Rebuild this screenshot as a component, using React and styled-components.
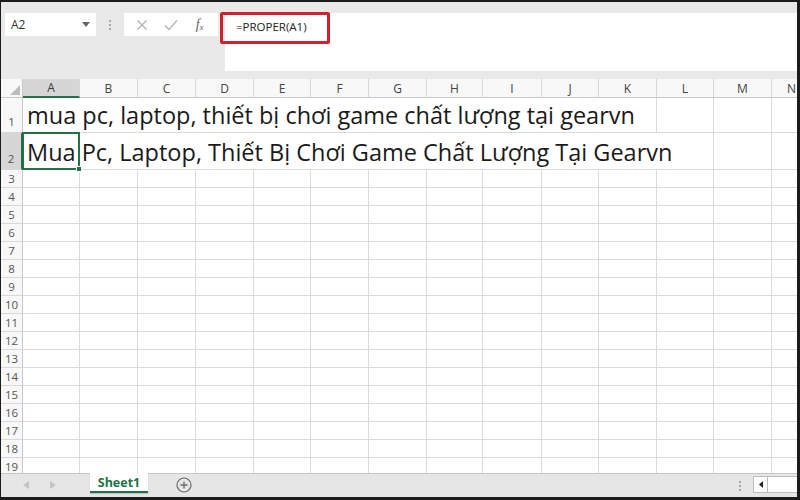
import React from "react";
import styled, { createGlobalStyle } from "styled-components";

const GlobalStyle = createGlobalStyle`
  html, body {
    margin: 0;
    padding: 0;
    background: #ffffff;
  }
  * {
    box-sizing: border-box;
  }
`;

const UI_FONT = `"Open Sans", "Noto Sans", "Liberation Sans", sans-serif`;
const GREEN = "#217346";
const GRID = "#dadada";

const COLUMNS = ["A", "B", "C", "D", "E", "F", "G", "H", "I", "J", "K", "L", "M", "N"];
const WIDTHS = [57, 58, 58, 58, 57, 58, 58, 56, 59, 57, 58, 57, 58, 40];

const ROW1 = "mua pc, laptop, thiết bị chơi game chất lượng tại gearvn";
const ROW2 = "Mua Pc, Laptop, Thiết Bị Chơi Game Chất Lượng Tại Gearvn";

function App() {
  const rows = [];
  for (let r = 1; r <= 19; r++) rows.push(r);

  // text overflows to the right, so inner grid lines are hidden up to this column
  const spillEnd = { 1: 10, 2: 11 };

  return (
    <>
      <GlobalStyle />
      <Frame>
        <Toolbar>
          <NameBox>
            <span>A2</span>
            <Caret>
              <svg width="8" height="5" viewBox="0 0 8 5">
                <path d="M0 0H8L4 5Z" fill="#666" />
              </svg>
            </Caret>
          </NameBox>
          <Grip>
            <Dot />
            <Dot />
            <Dot />
          </Grip>
          <ButtonBox>
            <ToolIcon>
              <svg width="12" height="12" viewBox="0 0 12 12">
                <path d="M1.5 1.5L10.5 10.5M10.5 1.5L1.5 10.5" stroke="#b3b3b3" strokeWidth="1.3" />
              </svg>
            </ToolIcon>
            <ToolIcon>
              <svg width="14" height="12" viewBox="0 0 14 12">
                <path d="M1 6.5L5 10.5L13 1.5" stroke="#b3b3b3" strokeWidth="1.3" fill="none" />
              </svg>
            </ToolIcon>
            <FxIcon>
              f<sub>x</sub>
            </FxIcon>
          </ButtonBox>
          <FormulaBar>
            <FormulaText>=PROPER(A1)</FormulaText>
            <Highlight />
          </FormulaBar>
        </Toolbar>

        <Sheet>
          <HeaderRow>
            <Corner>
              <svg width="10" height="10" viewBox="0 0 10 10">
                <path d="M10 0V10H0Z" fill="#bdbdbd" />
              </svg>
            </Corner>
            {COLUMNS.map((c, i) => (
              <ColHeader key={c} $w={WIDTHS[i]} $active={c === "A"}>
                {c}
              </ColHeader>
            ))}
          </HeaderRow>

          {rows.map((r) => (
            <Row key={r} $h={r === 1 ? 35 : r === 2 ? 37 : 18}>
              <RowHeader $active={r === 2} $big={r <= 2}>
                {r}
              </RowHeader>
              {COLUMNS.map((c, i) => (
                <Cell
                  key={c}
                  $w={WIDTHS[i]}
                  $noRight={spillEnd[r] !== undefined && i < spillEnd[r]}
                >
                  {i === 0 && r === 1 && <CellText>{ROW1}</CellText>}
                  {i === 0 && r === 2 && (
                    <>
                      <CellText>{ROW2}</CellText>
                      <Selection>
                        <Handle />
                      </Selection>
                    </>
                  )}
                </Cell>
              ))}
            </Row>
          ))}
        </Sheet>

        <TabBar>
          <NavArrows>
            <svg width="6" height="8" viewBox="0 0 6 8">
              <path d="M6 0V8L0 4Z" fill="#c4c4c4" />
            </svg>
            <svg width="6" height="8" viewBox="0 0 6 8">
              <path d="M0 0V8L6 4Z" fill="#c4c4c4" />
            </svg>
          </NavArrows>
          <SheetTab>Sheet1</SheetTab>
          <AddSheet>
            <svg width="16" height="16" viewBox="0 0 16 16">
              <circle cx="8" cy="8" r="7" stroke="#6b6b6b" strokeWidth="1.2" fill="none" />
              <path d="M8 4.5V11.5M4.5 8H11.5" stroke="#6b6b6b" strokeWidth="1.3" />
            </svg>
          </AddSheet>
          <Spacer />
          <Grip $small>
            <Dot />
            <Dot />
            <Dot />
          </Grip>
          <ScrollBox>
            <ScrollButton>
              <svg width="4" height="7" viewBox="0 0 4 7">
                <path d="M4 0V7L0 3.5Z" fill="#222" />
              </svg>
            </ScrollButton>
          </ScrollBox>
        </TabBar>
      </Frame>
    </>
  );
}

const Frame = styled.div`
  width: 800px;
  height: 500px;
  display: flex;
  flex-direction: column;
  overflow: hidden;
  border-top: 2px solid #1c1c1c;
  border-left: 1px solid #1c1c1c;
  border-right: 3px solid #1c1c1c;
  border-bottom: 3px solid #1c1c1c;
  background: #e9e9e9;
  font-family: ${UI_FONT};
`;

const Toolbar = styled.div`
  position: relative;
  height: 77px;
  flex-shrink: 0;
  display: flex;
  align-items: flex-start;
  padding: 11px 0 0 4px;
  background: #e9e9e9;
`;

const NameBox = styled.div`
  width: 91px;
  height: 23px;
  background: #fff;
  display: flex;
  align-items: center;
  justify-content: space-between;
  padding: 0 6px 0 6px;
  font-size: 12px;
  color: #333;
`;

const Caret = styled.span`
  display: flex;
  align-items: center;
`;

const Grip = styled.div`
  width: ${(p) => (p.$small ? "14px" : "28px")};
  height: 23px;
  display: flex;
  flex-direction: column;
  align-items: center;
  justify-content: center;
  gap: 2px;
`;

const Dot = styled.span`
  width: 2px;
  height: 2px;
  background: #a8a8a8;
`;

const ButtonBox = styled.div`
  width: 94px;
  height: 23px;
  background: #fff;
  display: flex;
  align-items: center;
  justify-content: space-around;
  padding: 0 4px;
`;

const ToolIcon = styled.span`
  width: 24px;
  display: flex;
  justify-content: center;
  align-items: center;
`;

const FxIcon = styled.span`
  width: 24px;
  text-align: center;
  font-family: "Liberation Serif", serif;
  font-style: italic;
  font-size: 14px;
  color: #666;
  line-height: 1;

  sub {
    font-size: 9px;
    vertical-align: -1px;
  }
`;

const FormulaBar = styled.div`
  position: relative;
  flex: 1;
  height: 58px;
  margin-left: 7px;
  background: #fff;
  padding: 6px 0 0 11px;
`;

const FormulaText = styled.div`
  font-size: 11.5px;
  color: #222;
  line-height: 16px;
`;

const Highlight = styled.div`
  position: absolute;
  left: -5px;
  top: -1px;
  width: 110px;
  height: 32px;
  border: 3px solid #d4202c;
  border-radius: 2px;
`;

const Sheet = styled.div`
  height: 394px;
  flex-shrink: 0;
  background: #fff;
  overflow: hidden;
`;

const HeaderRow = styled.div`
  display: flex;
  height: 19px;
  background: #f8f8f8;
`;

const Corner = styled.div`
  width: 22px;
  flex-shrink: 0;
  display: flex;
  align-items: flex-end;
  justify-content: flex-end;
  padding: 0 2px 2px 0;
  border-right: 1px solid #c8c8c8;
  border-bottom: 1px solid #c8c8c8;
`;

const ColHeader = styled.div`
  width: ${(p) => p.$w}px;
  flex-shrink: 0;
  display: flex;
  align-items: center;
  justify-content: center;
  font-size: 12px;
  color: ${(p) => (p.$active ? "#3a3a3a" : "#444")};
  background: ${(p) => (p.$active ? "#d6d6d6" : "transparent")};
  border-right: 1px solid #d8d8d8;
  border-bottom: ${(p) => (p.$active ? `2px solid ${GREEN}` : "1px solid #c8c8c8")};
`;

const Row = styled.div`
  display: flex;
  height: ${(p) => p.$h}px;
`;

const RowHeader = styled.div`
  width: 22px;
  flex-shrink: 0;
  display: flex;
  align-items: ${(p) => (p.$big ? "flex-end" : "center")};
  justify-content: center;
  padding-bottom: ${(p) => (p.$big ? "3px" : "0")};
  font-size: 11.5px;
  color: #555;
  background: ${(p) => (p.$active ? "#d6d6d6" : "#f8f8f8")};
  border-right: ${(p) => (p.$active ? `2px solid ${GREEN}` : "1px solid #c8c8c8")};
  border-bottom: 1px solid #d8d8d8;
`;

const Cell = styled.div`
  position: relative;
  width: ${(p) => p.$w}px;
  flex-shrink: 0;
  display: flex;
  align-items: flex-end;
  border-right: 1px solid ${(p) => (p.$noRight ? "transparent" : GRID)};
  border-bottom: 1px solid ${GRID};
`;

const CellText = styled.span`
  position: relative;
  z-index: 1;
  padding: 0 0 1px 4px;
  white-space: nowrap;
  font-family: "Open Sans", "Noto Sans", sans-serif;
  font-size: 23.5px;
  line-height: 31px;
  color: #1a1a1a;
`;

const Selection = styled.div`
  position: absolute;
  top: -1px;
  left: -1px;
  right: -1px;
  bottom: -1px;
  border: 2px solid ${GREEN};
  z-index: 2;
`;

const Handle = styled.div`
  position: absolute;
  right: -4px;
  bottom: -4px;
  width: 6px;
  height: 6px;
  background: ${GREEN};
  border: 1px solid #fff;
`;

const TabBar = styled.div`
  height: 24px;
  flex-shrink: 0;
  display: flex;
  align-items: flex-start;
  background: #e6e6e6;
  border-top: 1px solid #c6c6c6;
`;

const NavArrows = styled.div`
  width: 89px;
  height: 22px;
  display: flex;
  align-items: center;
  gap: 21px;
  padding-left: 22px;
`;

const SheetTab = styled.div`
  width: 58px;
  height: 20px;
  margin-top: -1px;
  display: flex;
  align-items: center;
  justify-content: center;
  background: #fff;
  border-bottom: 2px solid ${GREEN};
  box-shadow: 0 1px 1px rgba(0, 0, 0, 0.15);
  font-size: 12.5px;
  font-weight: 700;
  color: ${GREEN};
`;

const AddSheet = styled.div`
  width: 72px;
  height: 22px;
  display: flex;
  align-items: center;
  justify-content: center;
`;

const Spacer = styled.div`
  flex: 1;
`;

const ScrollBox = styled.div`
  width: 44px;
  height: 17px;
  margin: 2px 0 0 6px;
  background: #fff;
  border: 1px solid #bdbdbd;
  border-right: none;
  display: flex;
`;

const ScrollButton = styled.div`
  width: 14px;
  display: flex;
  align-items: center;
  justify-content: center;
  border-right: 1px solid #bdbdbd;
`;

export default App;
